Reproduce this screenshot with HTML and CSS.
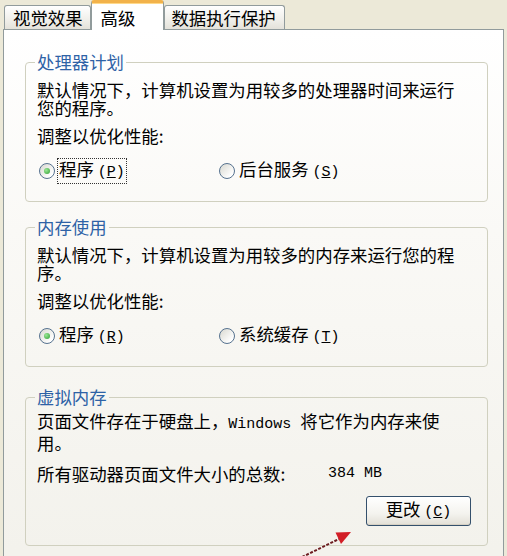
FILE: index.html
```html
<!DOCTYPE html>
<html lang="zh-CN">
<head>
<meta charset="utf-8">
<title>性能选项 - 高级</title>
<link rel="stylesheet" href="styles.css">
</head>
<body>
<div class="window">
  <div class="tabs">
    <div class="tab">视觉效果</div>
    <div class="tab tab-active">高级</div>
    <div class="tab tab-last">数据执行保护</div>
  </div>
  <div class="panel">
    <fieldset class="group">
      <legend>处理器计划</legend>
      <p class="desc">默认情况下，计算机设置为用较多的处理器时间来运行<br>您的程序。</p>
      <p class="sub">调整以优化性能:</p>
      <div class="radios">
        <label class="radio"><span class="dot checked"></span><span class="focus">程序 <span class="key">(<u>P</u>)</span></span></label>
        <label class="radio"><span class="dot"></span><span>后台服务 <span class="key">(<u>S</u>)</span></span></label>
      </div>
    </fieldset>
    <fieldset class="group g-mem">
      <legend>内存使用</legend>
      <p class="desc">默认情况下，计算机设置为用较多的内存来运行您的程<br>序。</p>
      <p class="sub">调整以优化性能:</p>
      <div class="radios">
        <label class="radio"><span class="dot checked"></span><span>程序 <span class="key">(<u>R</u>)</span></span></label>
        <label class="radio"><span class="dot"></span><span>系统缓存 <span class="key">(<u>T</u>)</span></span></label>
      </div>
    </fieldset>
    <fieldset class="group g-vm">
      <legend>虚拟内存</legend>
      <p class="desc">页面文件存在于硬盘上，<span class="mono">Windows </span>将它作为内存来使<br>用。</p>
      <div class="total">
        <span class="total-label">所有驱动器页面文件大小的总数:</span>
        <span class="mono">384 MB</span>
      </div>
      <div class="actions">
        <button class="btn" type="button">更改 <span class="key">(<u>C</u>)</span></button>
      </div>
    </fieldset>
  </div>
</div>
<svg class="arrow" width="507" height="556" viewBox="0 0 507 556" aria-hidden="true">
  <line x1="298" y1="559" x2="339" y2="539" stroke="#6E1E22" stroke-width="2" stroke-dasharray="3 1.5"/>
  <polygon points="351,532 335.5,532.5 341,544" fill="#D21E26"/>
</svg>
</body>
</html>
```
FILE: styles.css
```css
html, body {
  margin: 0;
  height: 100%;
  overflow: hidden;
}
body {
  background: #ECE9D8;
  font-family: "Noto Sans CJK SC", "Noto Sans", sans-serif;
  font-size: 17.4px;
  line-height: 18px;
  color: #000;
  position: relative;
}
.window {
  padding: 0 3px;
}
.tabs {
  display: flex;
  align-items: flex-end;
  height: 29px;
  padding-left: 1px;
  position: relative;
  z-index: 1;
}
.tab {
  box-sizing: border-box;
  height: 24px;
  border: 1px solid #919B9C;
  border-bottom: none;
  border-radius: 3px 3px 0 0;
  background: linear-gradient(#FFFFFF, #F0EFEA 60%, #E4E2DA);
  padding: 0 7px 0 8px;
  line-height: 23px;
  white-space: nowrap;
}
.tab-active {
  height: 30px;
  margin-bottom: -1px;
  border-top: 3px solid #F2B24A;
  box-shadow: inset 0 1px 0 #FFD98A;
  background: #FFFFFF;
  padding: 3px 28px 0 9px;
  line-height: 23px;
}
.tab-last {
  padding: 0 8px 0 6px;
}
.panel {
  border: 1px solid #919B9C;
  height: 600px;
  background: linear-gradient(#FFFFFF 0, #FAF9F6 200px, #F3F2EC 520px);
  padding: 23px 15px 0 21px;
}
.group {
  margin: 0;
  min-width: 0;
  border: 1px solid #D0D0BF;
  border-radius: 4px;
  padding: 10px 16px 21px 11px;
}
.group legend {
  padding: 0 2px;
  margin-left: -2px;
  color: #2E62A6;
  line-height: 18px;
}
.g-mem {
  margin-top: 16px;
}
.g-vm {
  margin-top: 21px;
  padding-top: 6px;
  padding-bottom: 19px;
}
p {
  margin: 0;
}
.desc {
  white-space: nowrap;
}
.sub {
  margin-top: 10px;
}
.radios {
  margin-top: 15px;
  height: 20px;
  display: grid;
  grid-template-columns: 180px auto;
  align-items: center;
}
.radio {
  display: flex;
  align-items: center;
  gap: 4px;
}
.dot {
  box-sizing: border-box;
  width: 16px;
  height: 16px;
  margin-left: 2px;
  border-radius: 50%;
  border: 1px solid #56728F;
  background: linear-gradient(135deg, #D8D8D0, #FFFFFF 80%);
  position: relative;
  flex: none;
}
.dot.checked::after {
  content: "";
  position: absolute;
  left: 4px;
  top: 4px;
  width: 6px;
  height: 6px;
  border-radius: 50%;
  background: radial-gradient(circle at 35% 35%, #9BE896, #2F9E32);
}
.focus {
  outline: 1px dotted #333;
  outline-offset: 1px;
}
.key {
  font-family: "Liberation Mono", monospace;
  font-size: 15px;
}
.mono {
  font-family: "Liberation Mono", monospace;
  font-size: 15px;
}
.total {
  margin-top: 13px;
  display: flex;
  white-space: nowrap;
}
.total-label {
  width: 291px;
  flex: none;
}
.actions {
  margin-top: 13px;
  display: flex;
  justify-content: flex-end;
}
.btn {
  box-sizing: border-box;
  width: 105px;
  height: 30px;
  padding: 0;
  border: 1px solid #34506C;
  border-radius: 3px;
  background: linear-gradient(#FFFFFF, #F4F3EE 60%, #E2DFD6);
  box-shadow: inset 0 -1px 0 #D6D0C4;
  font-family: inherit;
  font-size: 17.4px;
  line-height: 18px;
  color: #000;
}
.arrow {
  position: absolute;
  left: 0;
  top: 0;
  pointer-events: none;
}
```
